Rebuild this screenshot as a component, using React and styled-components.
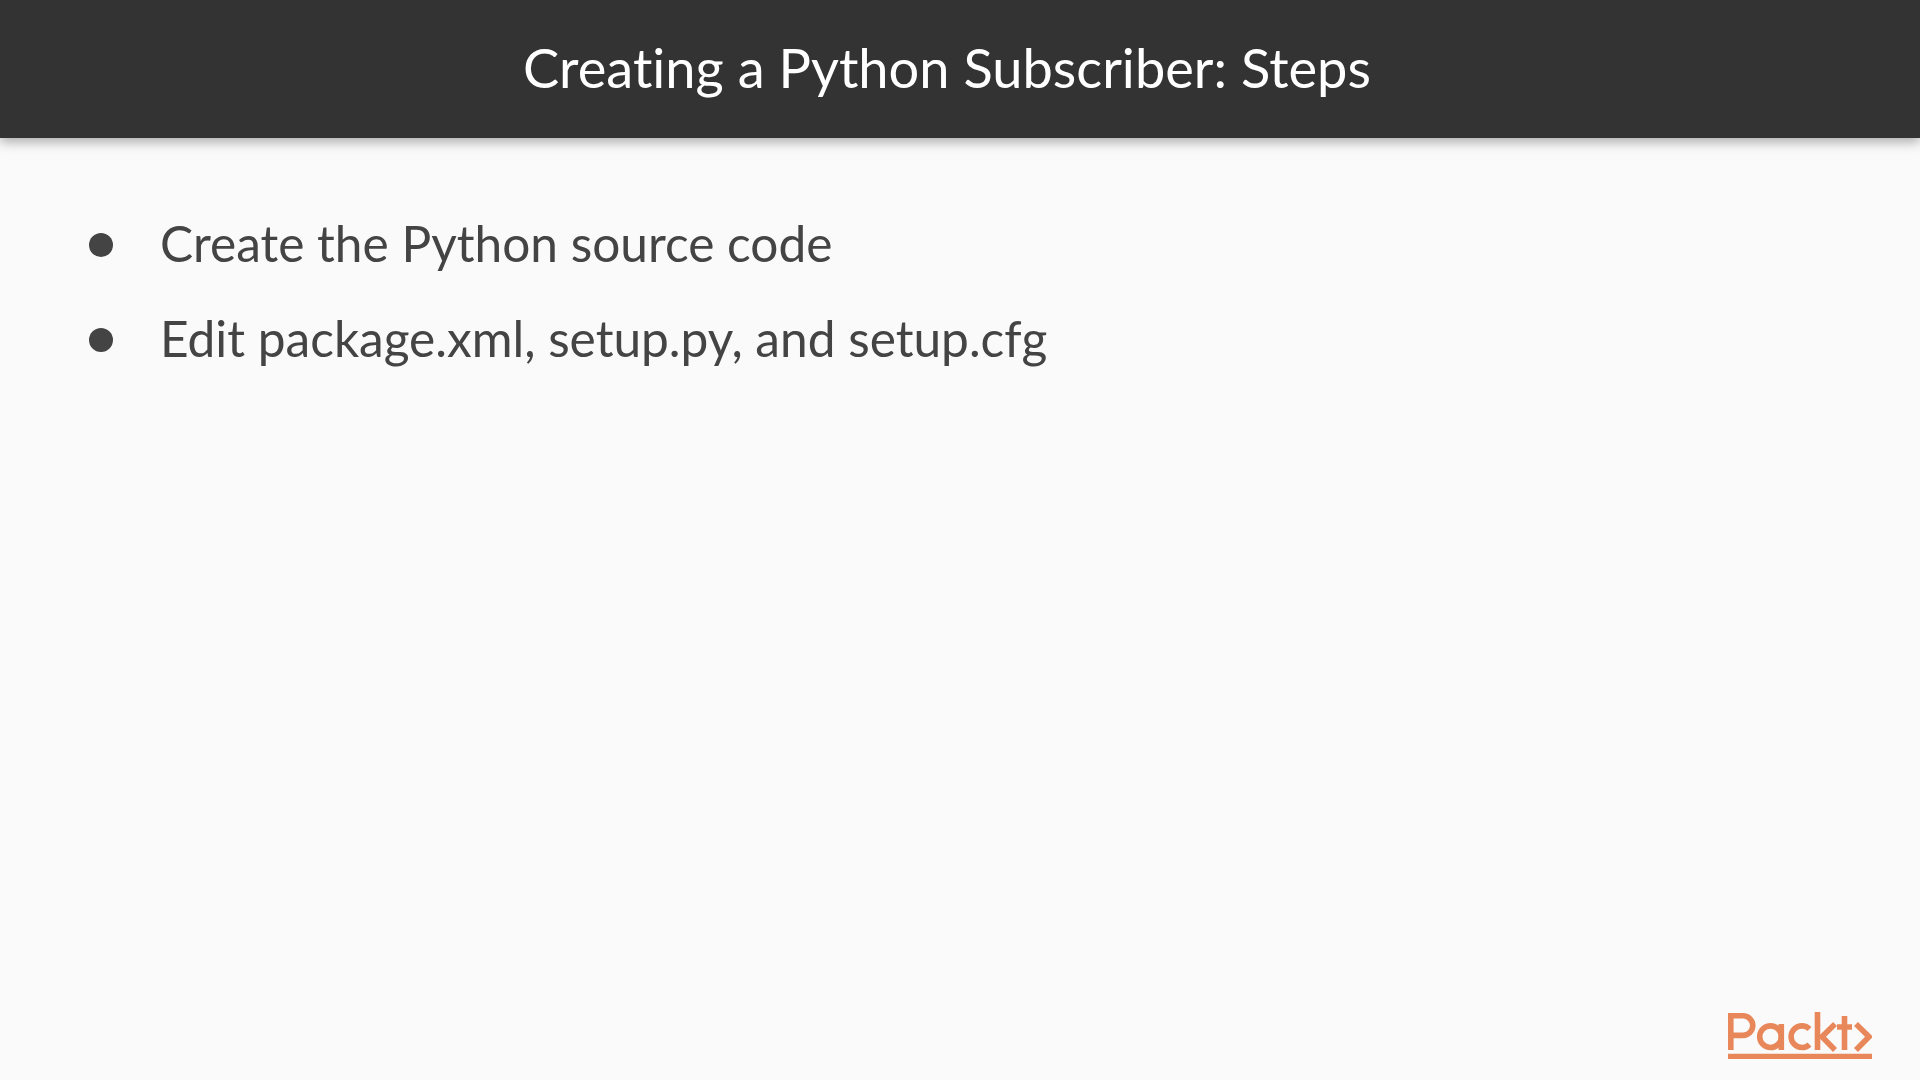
import React from "react";
import styled, { createGlobalStyle } from "styled-components";

const GlobalStyle = createGlobalStyle`
  html, body {
    margin: 0;
    padding: 0;
    background: #fafafa;
  }
`;

const Slide = styled.div`
  position: relative;
  width: 1920px;
  height: 1080px;
  overflow: hidden;
  background: #fafafa;
  font-family: "Lato", "Open Sans", sans-serif;
  font-variant-ligatures: none;
  display: flex;
  flex-direction: column;
`;

const Header = styled.header`
  height: 138px;
  flex-shrink: 0;
  background: #333333;
  box-shadow: 0 4px 11px rgba(0, 0, 0, 0.32);
  display: flex;
  align-items: center;
  justify-content: center;
  padding-right: 26px;
`;

const Title = styled.h1`
  margin: 0 0 4px 0;
  font-size: 54.2px;
  font-weight: 400;
  color: #ffffff;
`;

const Bullets = styled.ul`
  list-style: none;
  margin: 0;
  padding: 75px 0 0 89px;
  display: flex;
  flex-direction: column;
  gap: 35px;
`;

const Bullet = styled.li`
  display: flex;
  align-items: center;
  height: 60px;
  font-size: 49.6px;
  color: #444444;

  &::before {
    content: "";
    width: 24px;
    height: 24px;
    margin-top: 4px;
    border-radius: 50%;
    background: #444444;
    margin-right: 47px;
    flex-shrink: 0;
  }
`;

const LogoMark = styled.svg`
  position: absolute;
  left: 1728px;
  top: 1012px;
`;

const PacktLogo = () => (
  <LogoMark width="144" height="47" viewBox="0 0 144 47" fill="none" stroke="#e8885a" strokeWidth="5.6">
    <path d="M2.8 38V3.8H15a9.8 9.8 0 0 1 0 19.6H2.8" />
    <circle cx="42.5" cy="24.7" r="10.8" />
    <path d="M53.3 12v26" />
    <path d="M81.5 17a10.8 10.8 0 1 0 0 15.4" />
    <path d="M89.5 0v38" />
    <path d="M107 12L94 24.7 107 38" />
    <path d="M116.5 4v34M109 15h15" />
    <path d="M128 12l13 12.7L128 38" />
    <path d="M0 44.5h144" />
  </LogoMark>
);

const App = () => (
  <Slide>
    <GlobalStyle />
    <Header>
      <Title>Creating a Python Subscriber: Steps</Title>
    </Header>
    <Bullets>
      <Bullet>Create the Python source code</Bullet>
      <Bullet>Edit package.xml, setup.py, and setup.cfg</Bullet>
    </Bullets>
    <PacktLogo />
  </Slide>
);

export default App;
